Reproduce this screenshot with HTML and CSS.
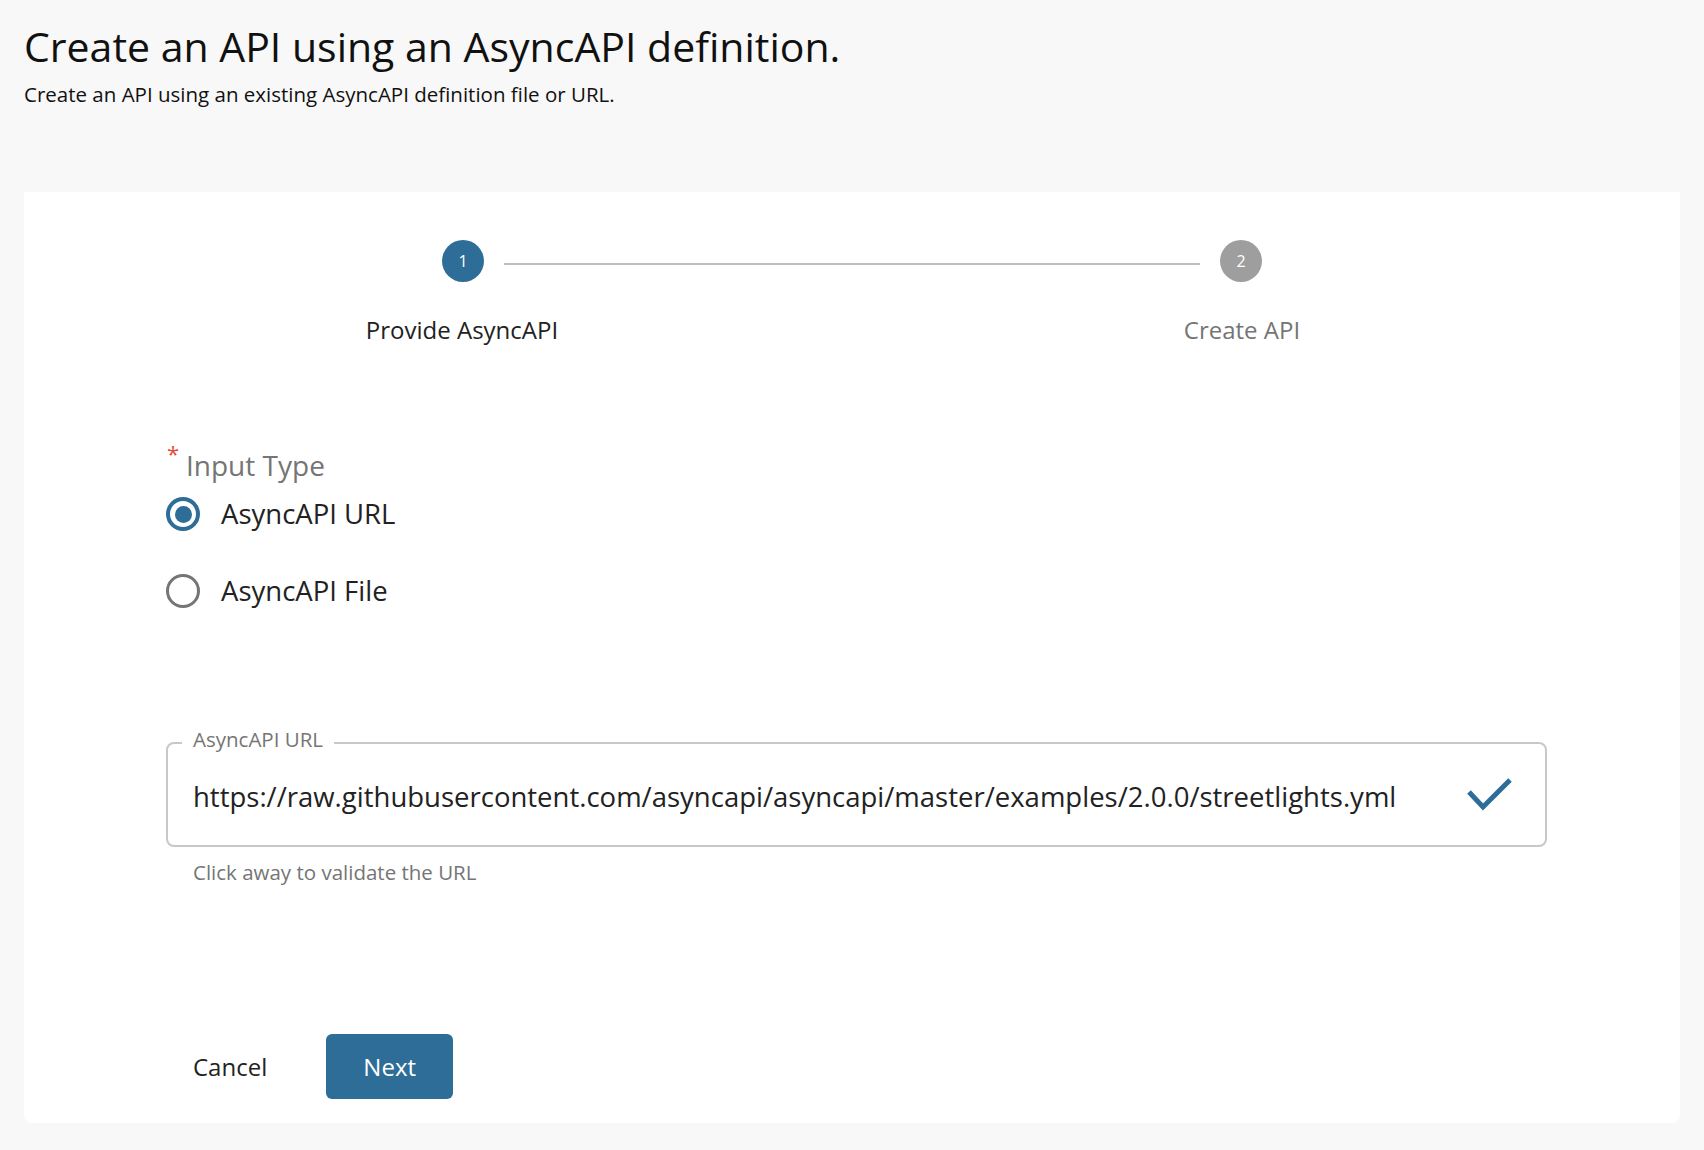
FILE: index.html
```html
<!DOCTYPE html>
<html lang="en">
<head>
<meta charset="utf-8">
<title>Create an API using an AsyncAPI definition.</title>
<link rel="stylesheet" href="styles.css">
</head>
<body>
<div class="page">
  <h1 class="title">Create an API using an AsyncAPI definition.</h1>
  <p class="subtitle">Create an API using an existing AsyncAPI definition file or URL.</p>

  <div class="card">
    <div class="stepper">
      <div class="step-icons">
        <div class="step-icon active">1</div>
        <div class="connector"></div>
        <div class="step-icon">2</div>
      </div>
      <div class="step-labels">
        <div class="step-label active">Provide AsyncAPI</div>
        <div class="step-label">Create API</div>
      </div>
    </div>

    <div class="form">
      <div class="group-label"><span class="req">*</span>Input Type</div>
      <div class="radio-row">
        <span class="radio checked"><span class="dot"></span></span>
        <span class="radio-text">AsyncAPI URL</span>
      </div>
      <div class="radio-row">
        <span class="radio"></span>
        <span class="radio-text">AsyncAPI File</span>
      </div>

      <div class="field">
        <span class="field-label">AsyncAPI URL</span>
        <span class="field-value">https://raw.githubusercontent.com/asyncapi/asyncapi/master/examples/2.0.0/streetlights.yml</span>
        <svg class="check" width="46" height="36" viewBox="0 0 46 36">
          <polyline points="2,15 16,30 43,3" fill="none" stroke="#2e6d97" stroke-width="5"/>
        </svg>
      </div>
      <div class="helper">Click away to validate the URL</div>

      <div class="actions">
        <button class="btn-text">Cancel</button>
        <button class="btn-primary">Next</button>
      </div>
    </div>
  </div>
</div>
</body>
</html>
```

FILE: styles.css
```css
* { box-sizing: border-box; }
html, body {
  margin: 0;
  padding: 0;
  background: #f8f8f8;
}
body {
  font-family: "Open Sans", "Noto Sans", sans-serif;
  color: #222;
}
.page {
  padding: 22px 24px 0;
}
.title {
  margin: 0;
  font-size: 41px;
  line-height: 48px;
  font-weight: 400;
  color: #111;
}
.subtitle {
  margin: 9px 0 0;
  font-size: 20.5px;
  line-height: 30px;
  color: #111;
}
.card {
  margin-top: 83px;
  background: #fff;
  border-radius: 0 0 8px 8px;
  padding: 48px 48px 24px;
  height: 931px;
}
.stepper {
  width: 100%;
}
.step-icons {
  display: flex;
  align-items: flex-start;
  padding: 0 370px;
}
.step-icon {
  width: 42px;
  height: 42px;
  border-radius: 50%;
  background: #9e9e9e;
  color: #fff;
  font-size: 16px;
  line-height: 42px;
  text-align: center;
  flex: none;
}
.step-icon.active {
  background: #2e6d97;
}
.connector {
  flex: 1;
  height: 2px;
  background: #bdbdbd;
  margin: 23px 20px 0;
}
.step-labels {
  display: grid;
  grid-template-columns: 1fr 1fr;
  margin-top: 31px;
}
.step-label {
  text-align: center;
  font-size: 24px;
  line-height: 33px;
  color: #757575;
}
.step-label.active {
  color: #222;
}
.form {
  padding: 0 85px 0 94px;
}
.group-label {
  margin-top: 98px;
  font-size: 28px;
  line-height: 42px;
  color: #757575;
  position: relative;
  padding-left: 20px;
}
.req {
  position: absolute;
  left: 1px;
  top: -6px;
  font-size: 22px;
  line-height: 30px;
  color: #e34b3b;
}
.radio-row {
  display: flex;
  align-items: center;
  height: 56px;
  margin-bottom: 21px;
}
.radio {
  width: 34px;
  height: 34px;
  border-radius: 50%;
  border: 3.5px solid #757575;
  display: flex;
  align-items: center;
  justify-content: center;
  flex: none;
}
.radio.checked {
  border: 4px solid #2e6d97;
}
.dot {
  width: 17px;
  height: 17px;
  border-radius: 50%;
  background: #2e6d97;
}
.radio-text {
  margin-left: 21px;
  font-size: 27.5px;
  line-height: 42px;
  color: #222;
}
.field {
  margin-top: 123px;
  position: relative;
  height: 105px;
  border: 2px solid #c8c8c8;
  border-radius: 8px;
  display: flex;
  align-items: center;
  padding: 0 32px 0 25px;
}
.field-label {
  position: absolute;
  top: -17px;
  left: 14px;
  padding: 0 11px;
  background: #fff;
  font-size: 20.5px;
  line-height: 24px;
  color: #757575;
}
.field-value {
  flex: 1;
  font-size: 27.5px;
  line-height: 40px;
  color: #222;
  white-space: nowrap;
  margin-top: 4px;
}
.check {
  flex: none;
}
.helper {
  margin-top: 11px;
  padding-left: 27px;
  font-size: 20.5px;
  line-height: 28px;
  color: #757575;
}
.actions {
  margin-top: 148px;
  display: flex;
  align-items: center;
}
.btn-text, .btn-primary {
  font-family: "Open Sans", "Noto Sans", sans-serif;
  font-size: 24px;
  border: none;
  height: 65px;
  cursor: pointer;
}
.btn-text {
  background: transparent;
  color: #222;
  padding: 0 27px;
  margin-right: 32px;
}
.btn-primary {
  background: #2e6d97;
  color: #fff;
  width: 127px;
  border-radius: 6px;
}
```
